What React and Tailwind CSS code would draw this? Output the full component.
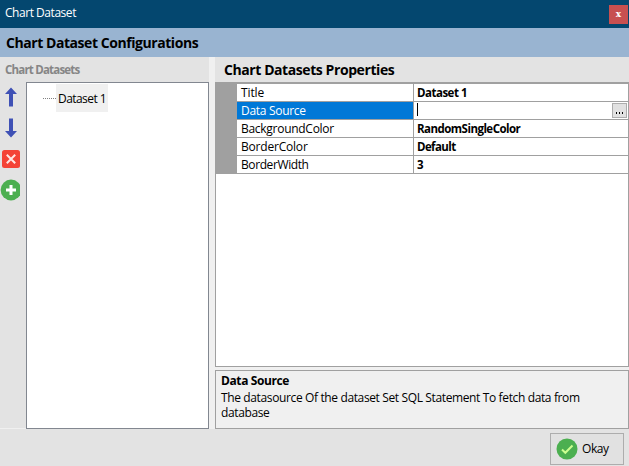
const rows = [
  { name: 'Title', value: 'Dataset 1', ls: 'tracking-[-0.1px]', vs: 'tracking-[-0.5px]' },
  { name: 'Data Source', value: '', selected: true, ls: 'tracking-[-0.3px]', vs: '' },
  { name: 'BackgroundColor', value: 'RandomSingleColor', ls: 'tracking-[-0.28px]', vs: 'tracking-[-0.53px]' },
  { name: 'BorderColor', value: 'Default', ls: 'tracking-[-0.2px]', vs: 'tracking-[-0.6px]' },
  { name: 'BorderWidth', value: '3', ls: 'tracking-[-0.4px]', vs: 'tracking-[-0.5px]' },
];

function Arrow({ down }) {
  return (
    <svg width="20" height="20" viewBox="0 0 20 20" className={down ? 'rotate-180' : ''}>
      <path d="M10 .5 16 7h-4v12.5H8V7H4z" fill="#3f51b5" />
    </svg>
  );
}

function Toolbar() {
  return (
    <div className="flex w-[26px] shrink-0 flex-col border-b border-[#f0f0f0] pl-px pt-[5px]">
      <Arrow />
      <div className="mt-[11px] h-5">
        <Arrow down />
      </div>
      <svg className="mt-[11px]" width="20" height="20" viewBox="0 0 20 20">
        <rect x="1" y="1" width="18" height="18" rx="2.5" fill="#f44336" />
        <path d="m5.800 5.800 8.400 8.400m0-8.400-8.400 8.400" stroke="#ffe6e3" strokeWidth="2" />
      </svg>
      <svg className="-ml-px mt-[10px]" width="20" height="22" viewBox="0 0 20 22">
        <circle cx="11" cy="11" r="10.4" fill="#4caf50" />
        <path d="M11 6v10M6 11h10" stroke="#fff" strokeWidth="3" />
      </svg>
    </div>
  );
}

function PropertyRow({ row }) {
  return (
    <div className="flex h-[18px] border-b border-[#a0a0a0]">
      <div
        className={`w-[176px] shrink-0 pl-1 leading-[18px] ${row.ls} ${row.selected ? 'bg-[#0078d7] text-white' : ''}`}
      >
        {row.name}
      </div>
      <div className={`flex flex-1 border-l border-[#a0a0a0] pl-[3px] text-[11.5px] font-bold leading-[17px] ${row.vs}`}>
        {row.value}
        {row.selected && (
          <>
            <span className="mt-px h-[13px] w-px bg-black" />
            <button className="ml-auto mr-px mt-px flex h-[15px] w-[15px] items-end justify-center gap-[2px] border border-[#adadad] bg-[#e1e1e1] pb-[3px]">
              <span className="h-[2px] w-px bg-black" />
              <span className="h-[2px] w-px bg-black" />
              <span className="h-[2px] w-px bg-black" />
            </button>
          </>
        )}
      </div>
    </div>
  );
}

export default function App() {
  return (
    <div className="flex h-[466px] w-[629px] flex-col overflow-hidden whitespace-nowrap bg-[#e3e3e3] font-['Open_Sans','Noto_Sans',sans-serif] text-[12px] text-black">
      <header className="flex h-[28px] shrink-0 justify-between bg-[#04476f] pl-[5px] pr-px text-white">
        <span className="leading-[26px] tracking-[-0.46px]">Chart Dataset</span>
        <button className="mt-[5px] h-[19px] w-[19px] bg-[#c75050] text-center font-['DejaVu_Serif',serif] text-[9px] font-bold leading-[17px]">
          x
        </button>
      </header>
      <h1 className="h-[29px] shrink-0 bg-[#99b4d1] pl-[6px] text-[14px] font-bold leading-[30px] tracking-[-0.44px]">
        Chart Dataset Configurations
      </h1>
      <main className="flex h-[372px] shrink-0">
        <section className="flex w-[209px] flex-col">
          <h2 className="h-[25px] pl-[5px] text-[11.5px] font-bold leading-[26px] tracking-[-0.8px] text-[#868686]">
            Chart Datasets
          </h2>
          <div className="flex flex-1">
            <Toolbar />
            <div className="flex-1 border border-[#828790] bg-white pl-[16px] pt-px">
              <div className="flex items-center">
                <svg width="13" height="1" viewBox="0 0 13 1">
                  <path d="M0 .5h13" stroke="#808080" strokeDasharray="1 1" />
                </svg>
                <span className="h-[28px] w-[52px] bg-[#f0f0f0] pl-[2px] leading-[29px] tracking-[-0.55px]">Dataset 1</span>
              </div>
            </div>
          </div>
        </section>
        <div className="w-[6px] bg-[#f0f0f0]" />
        <section className="flex w-[414px] flex-col">
          <h2 className="h-[25px] pl-[9px] text-[14px] font-bold leading-[26px] tracking-[-0.42px]">
            Chart Datasets Properties
          </h2>
          <div className="h-[285px] border border-t-2 border-[#a0a0a0] bg-white">
            <div className="border-l-[21px] border-[#a0a0a0]">
              {rows.map((row) => (
                <PropertyRow key={row.name} row={row} />
              ))}
            </div>
          </div>
          <div className="h-[3px] bg-[#f0f0f0]" />
          <div className="h-[59px] border border-[#a0a0a0] bg-[#f0f0f0] pl-[5px] pt-[1px]">
            <p className="h-[18px] font-bold leading-[18px] tracking-[-0.4px]">Data Source</p>
            <p className="w-[385px] whitespace-normal leading-[15px] tracking-[-0.37px]">
              The datasource Of the dataset Set SQL Statement To fetch data from database
            </p>
          </div>
        </section>
      </main>
      <footer className="flex flex-1 justify-end pr-[5px] pt-[4px]">
        <button className="flex h-[32px] w-[74px] items-center border border-[#adadad] bg-[#e1e1e1] pl-[5px]">
          <svg width="22" height="22" viewBox="0 0 22 22">
            <circle cx="11" cy="11" r="10.500" fill="#4caf50" />
            <path d="m6 11.500 3.300 3.300L16.500 7.500" fill="none" stroke="#ccff90" strokeWidth="2" />
          </svg>
          <span className="ml-[4px] tracking-[-0.4px]">Okay</span>
        </button>
      </footer>
    </div>
  );
}
